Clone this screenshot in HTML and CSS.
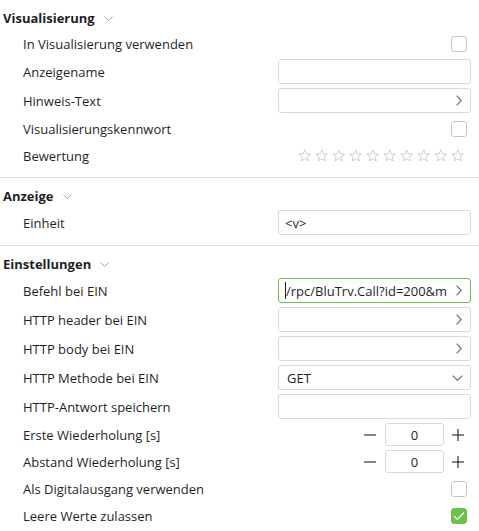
FILE: index.html
```html
<!DOCTYPE html>
<html lang="de">
<head>
<meta charset="utf-8">
<title>Einstellungen</title>
<link rel="stylesheet" href="styles.css">
</head>
<body>
<div class="panel">

  <section class="section">
    <div class="section-head"><span>Visualisierung</span><svg class="head-chev" width="9" height="5" viewBox="0 0 9 5"><polyline points="0.5,0.5 4.5,4.5 8.5,0.5"/></svg></div>
    <div class="row short"><span class="label">In Visualisierung verwenden</span><span class="check"></span></div>
    <div class="row tall"><span class="label">Anzeigename</span><div class="field"></div></div>
    <div class="row tall"><span class="label">Hinweis-Text</span><div class="field"><span class="val"></span><svg class="chev-r" width="6" height="11" viewBox="0 0 6 11"><polyline points="0.6,0.6 5.2,5.5 0.6,10.4"/></svg></div></div>
    <div class="row short"><span class="label">Visualisierungskennwort</span><span class="check"></span></div>
    <div class="row short"><span class="label">Bewertung</span>
      <div class="stars">
        <svg class="star" viewBox="0 0 14 14"><polygon points="7,1 8.7,5 13,5.3 9.7,8.1 10.7,12.5 7,10.1 3.3,12.5 4.3,8.1 1,5.3 5.3,5"/></svg>
        <svg class="star" viewBox="0 0 14 14"><polygon points="7,1 8.7,5 13,5.3 9.7,8.1 10.7,12.5 7,10.1 3.3,12.5 4.3,8.1 1,5.3 5.3,5"/></svg>
        <svg class="star" viewBox="0 0 14 14"><polygon points="7,1 8.7,5 13,5.3 9.7,8.1 10.7,12.5 7,10.1 3.3,12.5 4.3,8.1 1,5.3 5.3,5"/></svg>
        <svg class="star" viewBox="0 0 14 14"><polygon points="7,1 8.7,5 13,5.3 9.7,8.1 10.7,12.5 7,10.1 3.3,12.5 4.3,8.1 1,5.3 5.3,5"/></svg>
        <svg class="star" viewBox="0 0 14 14"><polygon points="7,1 8.7,5 13,5.3 9.7,8.1 10.7,12.5 7,10.1 3.3,12.5 4.3,8.1 1,5.3 5.3,5"/></svg>
        <svg class="star" viewBox="0 0 14 14"><polygon points="7,1 8.7,5 13,5.3 9.7,8.1 10.7,12.5 7,10.1 3.3,12.5 4.3,8.1 1,5.3 5.3,5"/></svg>
        <svg class="star" viewBox="0 0 14 14"><polygon points="7,1 8.7,5 13,5.3 9.7,8.1 10.7,12.5 7,10.1 3.3,12.5 4.3,8.1 1,5.3 5.3,5"/></svg>
        <svg class="star" viewBox="0 0 14 14"><polygon points="7,1 8.7,5 13,5.3 9.7,8.1 10.7,12.5 7,10.1 3.3,12.5 4.3,8.1 1,5.3 5.3,5"/></svg>
        <svg class="star" viewBox="0 0 14 14"><polygon points="7,1 8.7,5 13,5.3 9.7,8.1 10.7,12.5 7,10.1 3.3,12.5 4.3,8.1 1,5.3 5.3,5"/></svg>
        <svg class="star" viewBox="0 0 14 14"><polygon points="7,1 8.7,5 13,5.3 9.7,8.1 10.7,12.5 7,10.1 3.3,12.5 4.3,8.1 1,5.3 5.3,5"/></svg>
      </div>
    </div>
  </section>

  <section class="section">
    <div class="section-head"><span>Anzeige</span><svg class="head-chev" width="9" height="5" viewBox="0 0 9 5"><polyline points="0.5,0.5 4.5,4.5 8.5,0.5"/></svg></div>
    <div class="row tall"><span class="label">Einheit</span><div class="field"><span class="val">&lt;v&gt;</span></div></div>
  </section>

  <section class="section last">
    <div class="section-head"><span>Einstellungen</span><svg class="head-chev" width="9" height="5" viewBox="0 0 9 5"><polyline points="0.5,0.5 4.5,4.5 8.5,0.5"/></svg></div>
    <div class="row tall"><span class="label">Befehl bei EIN</span><div class="field focus"><span class="caret"></span><span class="val">/rpc/BluTrv.Call?id=200&amp;m</span><svg class="chev-r" width="6" height="11" viewBox="0 0 6 11"><polyline points="0.6,0.6 5.2,5.5 0.6,10.4"/></svg></div></div>
    <div class="row tall"><span class="label">HTTP header bei EIN</span><div class="field"><span class="val"></span><svg class="chev-r" width="6" height="11" viewBox="0 0 6 11"><polyline points="0.6,0.6 5.2,5.5 0.6,10.4"/></svg></div></div>
    <div class="row tall"><span class="label">HTTP body bei EIN</span><div class="field"><span class="val"></span><svg class="chev-r" width="6" height="11" viewBox="0 0 6 11"><polyline points="0.6,0.6 5.2,5.5 0.6,10.4"/></svg></div></div>
    <div class="row tall"><span class="label">HTTP Methode bei EIN</span><div class="field select"><span class="val">GET</span><svg class="chev-d" width="11" height="6" viewBox="0 0 11 6"><polyline points="0.6,0.6 5.5,5.2 10.4,0.6"/></svg></div></div>
    <div class="row tall"><span class="label">HTTP-Antwort speichern</span><div class="field"></div></div>
    <div class="row short"><span class="label">Erste Wiederholung [s]</span>
      <div class="stepper">
        <svg class="step-btn" width="12" height="12" viewBox="0 0 12 12"><line x1="0" y1="6" x2="12" y2="6"/></svg>
        <div class="step-val">0</div>
        <svg class="step-btn" width="12" height="12" viewBox="0 0 12 12"><line x1="0" y1="6" x2="12" y2="6"/><line x1="6" y1="0" x2="6" y2="12"/></svg>
      </div>
    </div>
    <div class="row short"><span class="label">Abstand Wiederholung [s]</span>
      <div class="stepper">
        <svg class="step-btn" width="12" height="12" viewBox="0 0 12 12"><line x1="0" y1="6" x2="12" y2="6"/></svg>
        <div class="step-val">0</div>
        <svg class="step-btn" width="12" height="12" viewBox="0 0 12 12"><line x1="0" y1="6" x2="12" y2="6"/><line x1="6" y1="0" x2="6" y2="12"/></svg>
      </div>
    </div>
    <div class="row short"><span class="label">Als Digitalausgang verwenden</span><span class="check"></span></div>
    <div class="row short"><span class="label">Leere Werte zulassen</span><span class="check on"><svg width="12" height="10" viewBox="0 0 12 10"><polyline points="1,5.2 4.3,8.5 11,1.5"/></svg></span></div>
  </section>

</div>
</body>
</html>
```
FILE: styles.css
```css
html, body {
  margin: 0;
  padding: 0;
  background: #ffffff;
}

body {
  font-family: "Open Sans", "Noto Sans", sans-serif;
  font-size: 13px;
  color: #1f1f1f;
}

.panel {
  width: 479px;
}

.section {
  padding: 5px 0 8px;
  border-bottom: 1px solid #e1e1e1;
}

.section.last {
  border-bottom: none;
}

.section-head {
  height: 25px;
  display: flex;
  align-items: center;
  gap: 9px;
  padding-left: 3px;
  font-weight: 700;
}

.head-chev {
  fill: none;
  stroke: #a8a8a8;
  stroke-width: 1;
  margin-top: 1px;
}

.row {
  display: flex;
  align-items: center;
  padding-left: 23px;
  padding-right: 8px;
}

.row.tall {
  height: 29px;
}

.row.short {
  height: 27px;
}

.label {
  flex: 1;
  white-space: nowrap;
}

.field {
  width: 193px;
  height: 25px;
  box-sizing: border-box;
  border: 1px solid #dadada;
  border-radius: 3px;
  display: flex;
  align-items: center;
  padding: 0 8px 0 6px;
  gap: 6px;
}

.field.focus {
  border-color: #6cc24c;
}

.field.select {
  padding-left: 8px;
  padding-right: 7px;
}

.val {
  flex: 1;
  white-space: nowrap;
  min-width: 0;
}

.caret {
  width: 1px;
  height: 17px;
  background: #1f1f1f;
  margin-right: -6px;
}

.chev-r, .chev-d {
  fill: none;
  stroke: #6a6a6a;
  stroke-width: 1.1;
  flex: none;
}

.check {
  width: 16px;
  height: 16px;
  box-sizing: border-box;
  border: 1px solid #c6c6c6;
  border-radius: 3px;
  margin-right: 4px;
  display: flex;
  align-items: center;
  justify-content: center;
}

.check.on {
  background: #6cc24c;
  border-color: #6cc24c;
}

.check.on svg {
  fill: none;
  stroke: #ffffff;
  stroke-width: 1.1;
}

.stars {
  display: flex;
  gap: 3.6px;
  margin-right: 7px;
}

.star {
  width: 13.4px;
  height: 13.4px;
  fill: none;
  stroke: #c4c4c4;
  stroke-width: 0.9;
  stroke-linejoin: round;
}

.stepper {
  display: flex;
  align-items: center;
  margin-right: 7px;
}

.step-btn {
  stroke: #1f1f1f;
  stroke-width: 1.1;
  flex: none;
}

.step-val {
  width: 59px;
  height: 23px;
  box-sizing: border-box;
  border: 1px solid #dadada;
  border-radius: 3px;
  margin: 0 8px 0 9px;
  display: flex;
  align-items: center;
  justify-content: center;
}
```
